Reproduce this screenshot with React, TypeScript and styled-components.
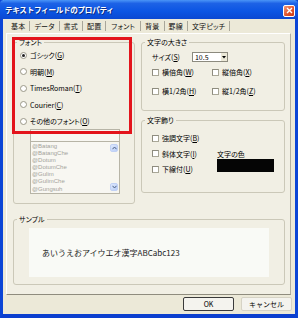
import React from 'react';
import styled, { createGlobalStyle } from 'styled-components';

const GlobalStyle = createGlobalStyle`
  html, body {
    margin: 0;
    padding: 0;
    background: #ffffff;
  }
  * {
    box-sizing: border-box;
  }
`;

const Window = styled.div`
  width: 298px;
  height: 318px;
  display: flex;
  flex-direction: column;
  background: #ece9d8;
  border-left: 3px solid #0b45d6;
  border-right: 3px solid #0b45d6;
  border-bottom: 4px solid #0b3fcf;
  font-family: 'Noto Sans CJK JP', 'Noto Sans', sans-serif;
  font-feature-settings: 'palt';
  font-size: 7px;
  color: #000;
  position: relative;
`;

const TitleBar = styled.div`
  height: 19px;
  margin: 0 -3px;
  padding: 0 3px 0 5px;
  display: flex;
  align-items: center;
  justify-content: space-between;
  background: linear-gradient(#4a95f7 0%, #1d62e6 18%, #0b55e3 60%, #0a48d2 100%);
  border-radius: 4px 4px 0 0;
`;

const Title = styled.div`
  color: #fff;
  font-weight: bold;
  font-size: 7.6px;
  font-feature-settings: normal;
  letter-spacing: -0.3px;
  text-shadow: 1px 1px 0 #0a2a80;
`;

const CloseButton = styled.div`
  width: 12px;
  height: 12px;
  margin-top: 2px;
  border-radius: 2px;
  border: 1px solid #fff;
  background: linear-gradient(135deg, #f09a7c 0%, #e2552c 55%, #c83a18 100%);
  display: flex;
  align-items: center;
  justify-content: center;
`;

const Body = styled.div`
  flex: 1;
  display: flex;
  flex-direction: column;
  padding: 0 1px 0 3px;
`;

const TabRow = styled.div`
  height: 14px;
  display: flex;
  align-items: center;
  padding-left: 1px;
`;

const Tab = styled.div<{ $active?: boolean }>`
  height: 10px;
  line-height: 10px;
  padding: 0 4px;
  border-right: 1px solid #a8a69a;
  color: #111;
  letter-spacing: 0.2px;
  ${p => (p.$active ? 'padding: 0 5px;' : '')}
`;

const Panel = styled.div`
  height: 262px;
  margin-right: 3px;
  background: #f1efe4;
  border: 1px solid #ffffff;
  border-right-color: #b0ad9f;
  border-bottom-color: #8f8c7e;
  padding: 4px 5px 0 6px;
  display: flex;
  flex-direction: column;
`;

const TopGrid = styled.div`
  display: grid;
  grid-template-columns: 122px 144px;
  column-gap: 6px;
  align-items: start;
`;

const FontCell = styled.div`
  position: relative;
`;

const Group = styled.fieldset<{ $h: number }>`
  margin: 0;
  min-width: 0;
  height: ${p => p.$h}px;
  padding: 0;
  border: 1px solid #cbc8b8;
  border-radius: 3px;
  display: flex;
  flex-direction: column;
`;

const Legend = styled.legend`
  padding: 0 2px;
  margin-left: 3px;
  line-height: 9px;
  height: 9px;
`;

const Highlight = styled.div`
  position: absolute;
  left: -1px;
  top: -1px;
  width: 120px;
  height: 97px;
  border: 3px solid #e3141c;
  pointer-events: none;
`;

const RadioList = styled.div`
  display: flex;
  flex-direction: column;
  padding-left: 6px;
`;

const OptionRow = styled.div<{ $h?: number }>`
  height: ${p => p.$h ?? 16.5}px;
  display: flex;
  align-items: center;
  gap: 3px;
  white-space: nowrap;
`;

const RadioCircle = styled.span<{ $on?: boolean }>`
  width: 7px;
  height: 7px;
  border-radius: 50%;
  border: 1px solid #9a9888;
  background: #fff;
  display: flex;
  align-items: center;
  justify-content: center;
  &::after {
    content: '';
    width: 3px;
    height: 3px;
    border-radius: 50%;
    background: ${p => (p.$on ? '#222' : 'transparent')};
  }
`;

const FontPicker = styled.div`
  margin: -1px 0 0 16px;
  width: 90px;
  display: flex;
  flex-direction: column;
`;

const NameBox = styled.div`
  height: 12px;
  background: #f8f7f2;
  border: 1px solid #b7b4a6;
  border-bottom: none;
`;

const ListBox = styled.div`
  height: 53px;
  background: #f8f7f2;
  border: 1px solid #b7b4a6;
  display: flex;
`;

const ListItems = styled.div`
  flex: 1;
  padding: 1px 0 0 1px;
  display: flex;
  flex-direction: column;
  color: #a4a39a;
  font-family: 'Liberation Sans', Arial, sans-serif;
  font-size: 6px;
  font-feature-settings: normal;
`;

const ListItem = styled.div`
  height: 7.2px;
  line-height: 7.2px;
`;

const ScrollBar = styled.div`
  width: 9px;
  display: flex;
  flex-direction: column;
  justify-content: space-between;
  padding: 2px 0;
  background: #f7f6f0;
`;

const ScrollArrow = styled.div`
  width: 8px;
  height: 8px;
  border-radius: 2px;
  background: linear-gradient(135deg, #dfe9fd, #b9cdf6);
  border: 1px solid #c1d1f5;
  display: flex;
  align-items: center;
  justify-content: center;
`;

const RightCol = styled.div`
  display: flex;
  flex-direction: column;
  gap: 5px;
`;

const GroupBody = styled.div<{ $pt: number }>`
  padding: ${p => p.$pt}px 0 0 10px;
  display: flex;
  flex-direction: column;
`;

const SizeRow = styled.div`
  height: 12px;
  display: flex;
  align-items: center;
  gap: 12px;
`;

const Combo = styled.div`
  width: 36px;
  height: 10px;
  background: #fff;
  border: 1px solid #8c8a7e;
  display: flex;
  align-items: center;
  justify-content: space-between;
  padding-left: 2px;
  font-feature-settings: normal;
`;

const ComboButton = styled.div`
  width: 7px;
  height: 8px;
  background: #ece9d8;
  border-left: 1px solid #fff;
  display: flex;
  align-items: center;
  justify-content: center;
`;

const CheckGrid = styled.div`
  display: grid;
  grid-template-columns: 60px 60px;
  row-gap: 7px;
  margin-top: 3px;
`;

const CheckBox = styled.span`
  width: 7px;
  height: 7px;
  background: #fff;
  border: 1px solid #a9a797;
  border-top-color: #8e8c7f;
  border-left-color: #8e8c7f;
  flex-shrink: 0;
`;

const DecoRow = styled.div`
  display: flex;
`;

const DecoChecks = styled.div`
  width: 65px;
  display: flex;
  flex-direction: column;
  gap: 3.5px;
`;

const ColorCol = styled.div`
  margin-top: 18px;
  display: flex;
  flex-direction: column;
`;

const ColorLabel = styled.div`
  height: 9px;
  line-height: 9px;
`;

const ColorSwatch = styled.div`
  width: 57px;
  height: 13px;
  background: #050505;
`;

const SampleGroup = styled(Group)`
  margin-top: 11px;
`;

const SampleBox = styled.div`
  margin: 4px 15px 0 15px;
  height: 49px;
  background: #f9faf6;
  display: flex;
  align-items: center;
  padding-left: 13px;
  font-size: 8px;
  font-feature-settings: normal;
  color: #222;
`;

const ButtonRow = styled.div`
  display: flex;
  justify-content: flex-end;
  gap: 7px;
  padding: 2px 2px 0 0;
`;

const Button = styled.div<{ $default?: boolean }>`
  width: 51px;
  height: 14px;
  display: flex;
  align-items: center;
  justify-content: center;
  background: #f4f3ee;
  border: 1px solid ${p => (p.$default ? '#3a3a3a' : '#d6d3c5')};
  border-radius: 2px;
  font-feature-settings: normal;
`;

const tabs = ['基本', 'データ', '書式', '配置', 'フォント', '背景', '罫線', '文字ピッチ'];

const fonts = [
  { label: 'ゴシック', key: 'G', on: true },
  { label: '明朝', key: 'M' },
  { label: 'TimesRoman', key: 'T' },
  { label: 'Courier', key: 'C' },
  { label: 'その他のフォント', key: 'O' },
];

const otherFonts = ['@Batang', '@BatangChe', '@Dotum', '@DotumChe', '@Gulim', '@GulimChe', '@Gungsuh'];

const Mnemonic = ({ label, k }: { label: string; k: string }) => (
  <span>
    {label}(<u>{k}</u>)
  </span>
);

const Check = ({ label, k, h }: { label: string; k: string; h?: number }) => (
  <OptionRow $h={h ?? 12}>
    <CheckBox />
    <Mnemonic label={label} k={k} />
  </OptionRow>
);

const Arrow = ({ up }: { up?: boolean }) => (
  <svg width="5" height="4" viewBox="0 0 5 4">
    <path d={up ? 'M0.5 3.2 L2.5 1 L4.5 3.2' : 'M0.5 0.8 L2.5 3 L4.5 0.8'} stroke="#4d6185" strokeWidth="1" fill="none" />
  </svg>
);

export default function App() {
  return (
    <>
      <GlobalStyle />
      <Window>
        <TitleBar>
          <Title>テキストフィールドのプロパティ</Title>
          <CloseButton>
            <svg width="7" height="7" viewBox="0 0 7 7">
              <path d="M1 1 L6 6 M6 1 L1 6" stroke="#fff" strokeWidth="1.4" />
            </svg>
          </CloseButton>
        </TitleBar>
        <Body>
          <TabRow>
            {tabs.map(t => (
              <Tab key={t} $active={t === 'フォント'}>
                {t}
              </Tab>
            ))}
          </TabRow>
          <Panel>
            <TopGrid>
              <FontCell>
                <Group $h={166}>
                  <Legend>フォント</Legend>
                  <RadioList>
                    {fonts.map(f => (
                      <OptionRow key={f.key}>
                        <RadioCircle $on={f.on} />
                        <Mnemonic label={f.label} k={f.key} />
                      </OptionRow>
                    ))}
                  </RadioList>
                  <FontPicker>
                    <NameBox />
                    <ListBox>
                      <ListItems>
                        {otherFonts.map(n => (
                          <ListItem key={n}>{n}</ListItem>
                        ))}
                      </ListItems>
                      <ScrollBar>
                        <ScrollArrow>
                          <Arrow up />
                        </ScrollArrow>
                        <ScrollArrow>
                          <Arrow />
                        </ScrollArrow>
                      </ScrollBar>
                    </ListBox>
                  </FontPicker>
                </Group>
                <Highlight />
              </FontCell>
              <RightCol>
                <Group $h={73}>
                  <Legend>文字の大きさ</Legend>
                  <GroupBody $pt={4}>
                    <SizeRow>
                      <Mnemonic label="サイズ" k="S" />
                      <Combo>
                        10.5
                        <ComboButton>
                          <svg width="4" height="3" viewBox="0 0 4 3">
                            <path d="M0 0 H4 L2 2.5 Z" fill="#000" />
                          </svg>
                        </ComboButton>
                      </Combo>
                    </SizeRow>
                    <CheckGrid>
                      <Check label="横倍角" k="W" />
                      <Check label="縦倍角" k="X" />
                      <Check label="横1/2角" k="H" />
                      <Check label="縦1/2角" k="Z" />
                    </CheckGrid>
                  </GroupBody>
                </Group>
                <Group $h={77}>
                  <Legend>文字飾り</Legend>
                  <GroupBody $pt={7}>
                    <DecoRow>
                      <DecoChecks>
                        <Check label="強調文字" k="B" />
                        <Check label="斜体文字" k="I" />
                        <Check label="下線付" k="U" />
                      </DecoChecks>
                      <ColorCol>
                        <ColorLabel>文字の色</ColorLabel>
                        <ColorSwatch />
                      </ColorCol>
                    </DecoRow>
                  </GroupBody>
                </Group>
              </RightCol>
            </TopGrid>
            <SampleGroup $h={70}>
              <Legend>サンプル</Legend>
              <SampleBox>あいうえおアイウエオ漢字ABCabc123</SampleBox>
            </SampleGroup>
          </Panel>
          <ButtonRow>
            <Button $default>OK</Button>
            <Button>キャンセル</Button>
          </ButtonRow>
        </Body>
      </Window>
    </>
  );
}
